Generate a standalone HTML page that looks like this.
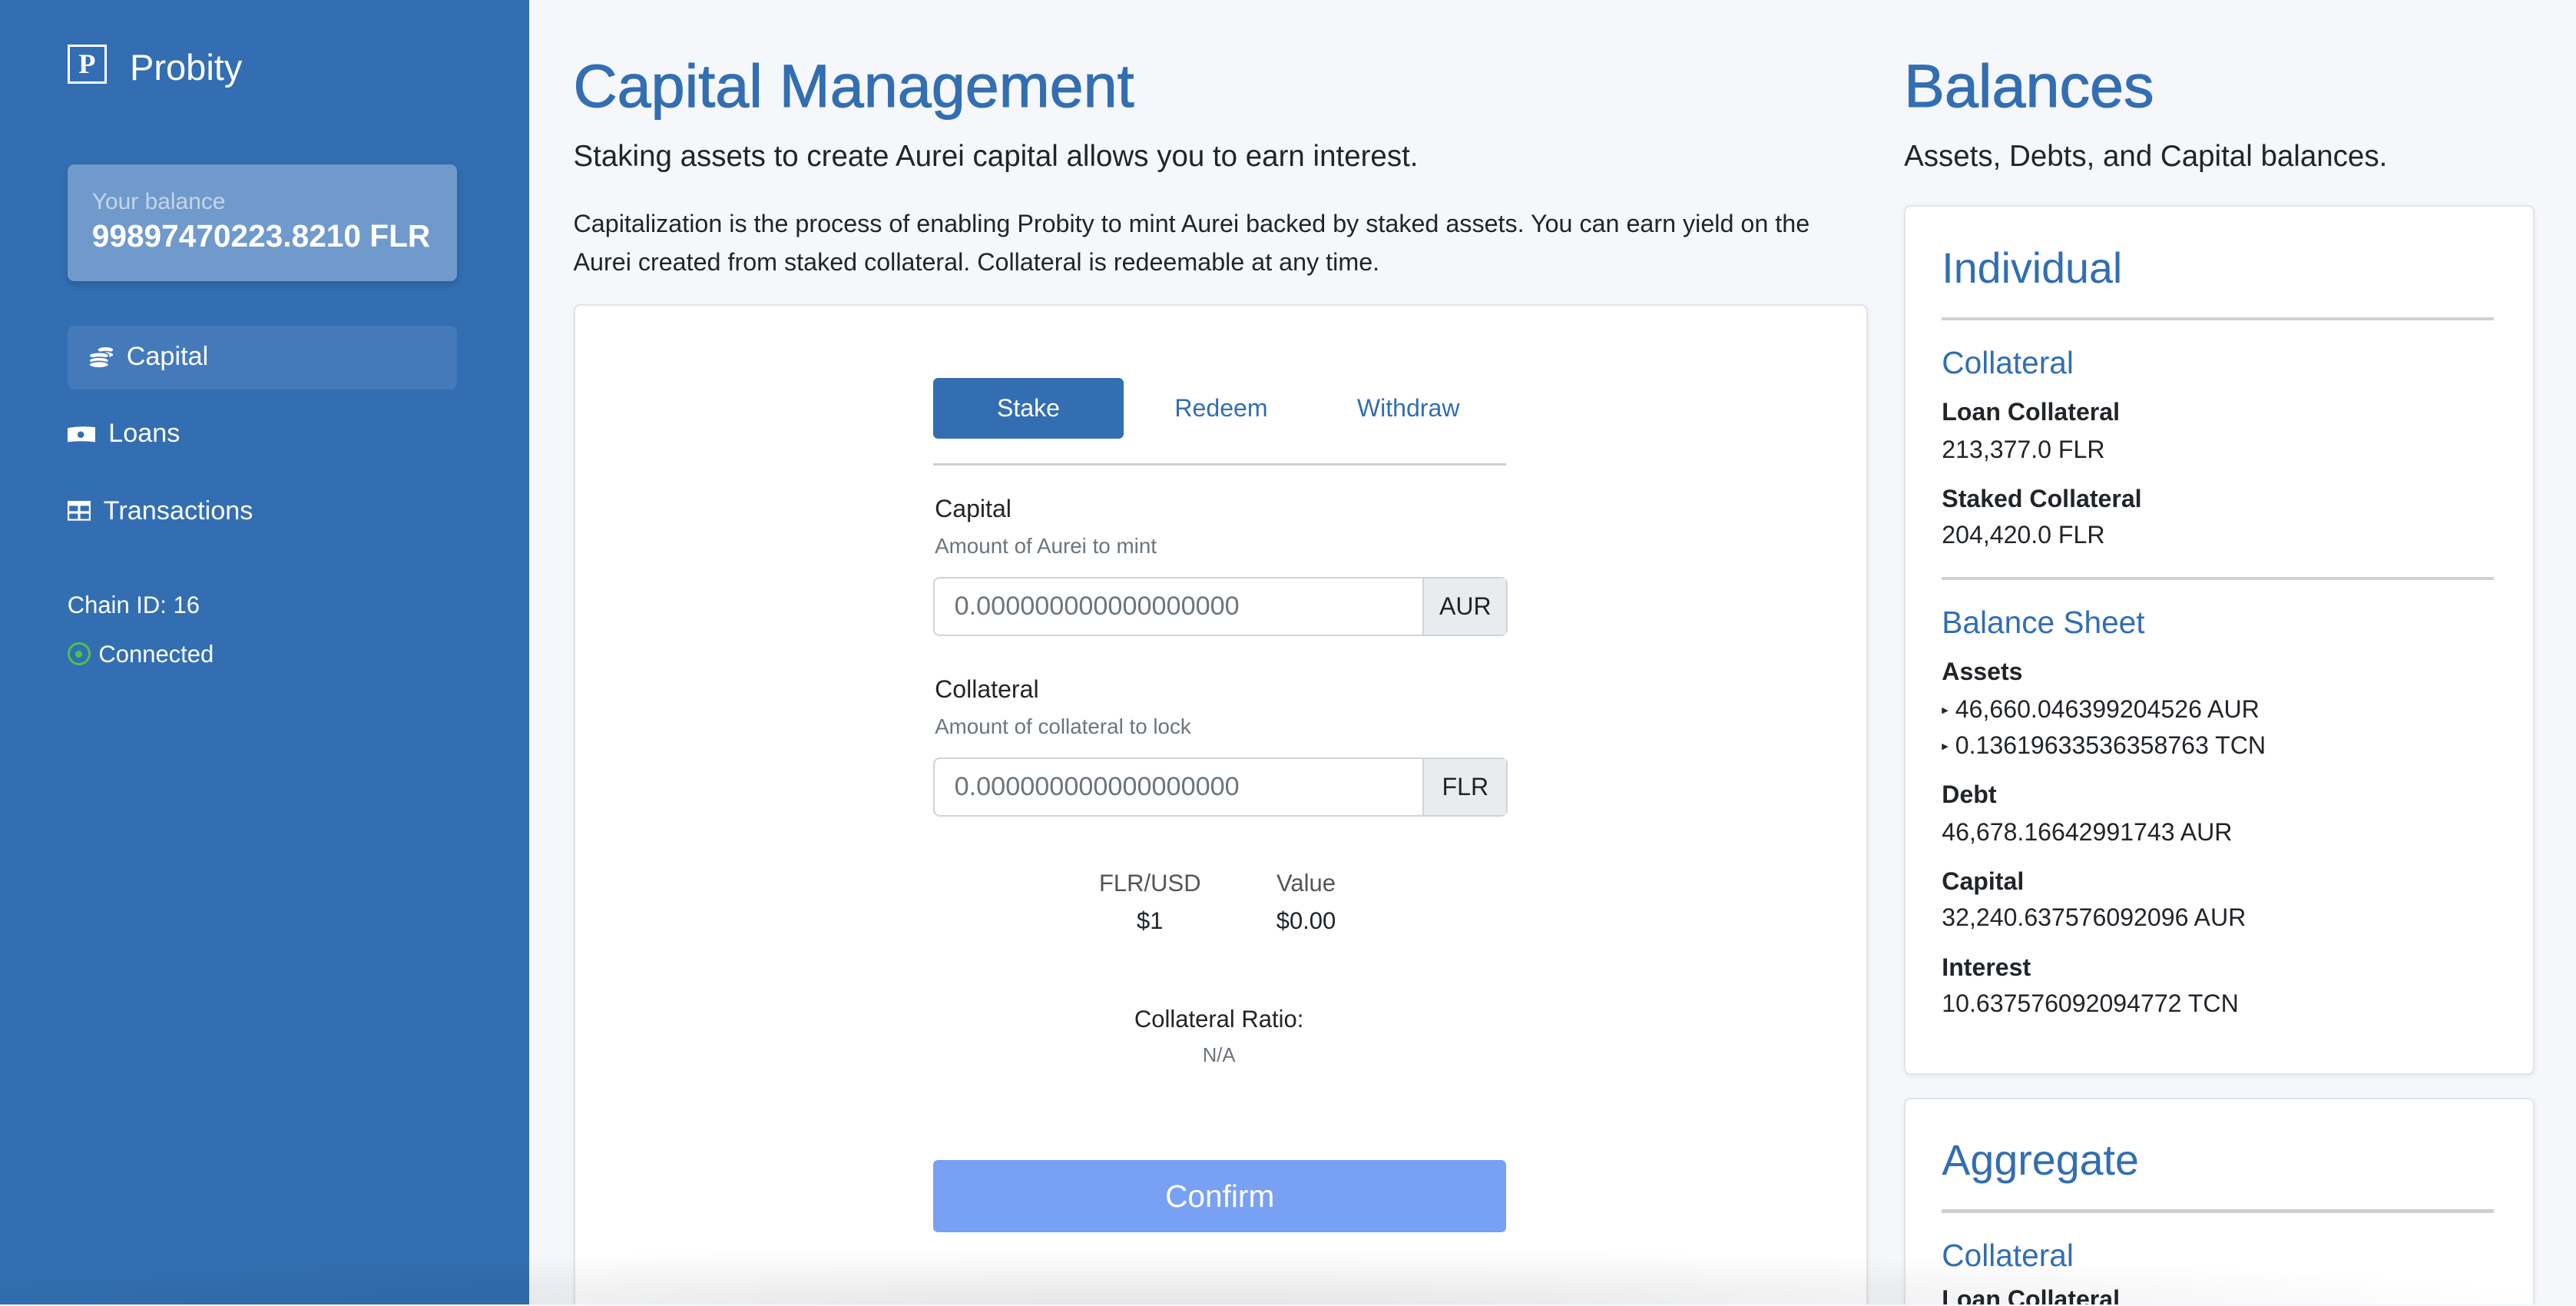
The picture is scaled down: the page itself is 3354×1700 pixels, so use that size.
<!DOCTYPE html>
<html style="height:1700px;overflow:hidden"><head><meta charset="utf-8"><style>
html,body{margin:0;padding:0}
body{width:3354px;height:1700px;overflow:hidden;background:#f5f7fa}
#w{width:1568px;height:794px;overflow:hidden;zoom:2.139;background:#f5f7fa;font-family:"Liberation Sans",sans-serif;position:relative;color:#212529}
.a{position:absolute;white-space:nowrap}
.sb{position:absolute;left:0;top:0;width:322px;height:794px;background:#326eb1;color:#fff}
.blue{color:#326eb1}
.card{position:absolute;background:#fff;border:1px solid #e1e4e8;border-radius:4px;box-shadow:0 1px 3px rgba(0,0,0,.06)}
.hr{position:absolute;height:2px;background:#d0d0d0}
.inp{position:absolute;left:568px;width:348px;height:34px;border:1px solid #ced4da;border-radius:4px;background:#fff}
.inp span{position:absolute;left:12px;top:8px;font-size:16px;color:#6c757d}
.inp b{position:absolute;right:0;top:0;width:50px;height:34px;background:#e9ecef;border-left:1px solid #ced4da;font-weight:normal;font-size:15px;line-height:34px;text-align:center;color:#212529}
.lbl{font-size:15px}
.hl{font-size:13px;color:#6c757d}
.k{font-size:15px;font-weight:bold}
.v{font-size:15px}
</style></head><body><div id="w">
<div class="sb">
 <div class="a" style="left:41px;top:27px;width:24px;height:24px;border:1.5px solid #fff;box-sizing:border-box;font-family:'Liberation Serif',serif;font-weight:bold;font-size:17px;text-align:center;line-height:21px">P</div>
 <div class="a" style="left:79px;top:28px;font-size:22px">Probity</div>
 <div class="a" style="left:41px;top:100px;width:237px;height:71px;background:#6f9acb;border-radius:4px;box-shadow:0 2px 4px rgba(0,0,0,.15)"></div>
 <div class="a" style="left:56px;top:115px;font-size:14px;color:#c5d5ea">Your balance</div>
 <div class="a" style="left:56px;top:133px;font-size:19px;font-weight:bold">99897470223.8210 FLR</div>
 <div class="a" style="left:41px;top:198px;width:237px;height:39px;background:#4479ba;border-radius:4px"></div>
 <svg class="a" style="left:54px;top:210px" width="16" height="14" viewBox="0 0 16 14"><g fill="#fff" stroke="#4479ba" stroke-width="0.8"><ellipse cx="10" cy="3" rx="5" ry="2"/><ellipse cx="10" cy="6" rx="5" ry="2"/><ellipse cx="6" cy="6.5" rx="6" ry="2"/><ellipse cx="6" cy="9.5" rx="6" ry="2"/><ellipse cx="6" cy="12" rx="6" ry="2"/></g></svg>
 <div class="a" style="left:77px;top:208px;font-size:16px">Capital</div>
 <svg class="a" style="left:41px;top:259px" width="17" height="11" viewBox="0 0 17 11"><path d="M0 1.5Q8 0 17 1V10Q8 9 0 10Z" fill="#fff"/><circle cx="8" cy="5.5" r="2" fill="#326eb1"/></svg>
 <div class="a" style="left:66px;top:255px;font-size:16px">Loans</div>
 <svg class="a" style="left:41px;top:305px" width="14" height="12" viewBox="0 0 14 12"><rect x="0.5" y="0.5" width="13" height="11" fill="none" stroke="#fff"/><rect x="0" y="0" width="14" height="3" fill="#fff"/><line x1="0" y1="7" x2="14" y2="7" stroke="#fff" stroke-width="1.5"/><line x1="7" y1="0" x2="7" y2="12" stroke="#fff" stroke-width="1.5"/></svg>
 <div class="a" style="left:63px;top:302px;font-size:16px">Transactions</div>
 <div class="a" style="left:41px;top:360px;font-size:14.5px">Chain ID: 16</div>
 <div class="a" style="left:41px;top:391px;width:14px;height:14px;border:1.5px solid #4ec24e;border-radius:50%;box-sizing:border-box"></div>
 <div class="a" style="left:46px;top:396px;width:4px;height:4px;background:#4ec24e;border-radius:50%"></div>
 <div class="a" style="left:60px;top:390px;font-size:14.5px">Connected</div>
</div>

<div class="a blue" style="left:349px;top:31px;font-size:37px;-webkit-text-stroke:0.5px #326eb1">Capital Management</div>
<div class="a" style="left:349px;top:85px;font-size:18px">Staking assets to create Aurei capital allows you to earn interest.</div>
<div class="a" style="left:349px;top:125px;font-size:15.1px;line-height:23px">Capitalization is the process of enabling Probity to mint Aurei backed by staked assets. You can earn yield on the<br>Aurei created from staked collateral. Collateral is redeemable at any time.</div>

<div class="card" style="left:349px;top:185px;width:786px;height:609px;border-bottom:none;border-radius:4px 4px 0 0"></div>
<div class="a" style="left:568px;top:230px;width:116px;height:37px;background:#326eb1;border-radius:3px;color:#fff;font-size:15px;text-align:center;line-height:37px">Stake</div>
<div class="a blue" style="left:715px;top:240px;font-size:15px">Redeem</div>
<div class="a blue" style="left:826px;top:240px;font-size:15px">Withdraw</div>
<div class="hr" style="left:568px;top:282px;width:349px;height:1.5px"></div>
<div class="a lbl" style="left:569px;top:301px">Capital</div>
<div class="a hl" style="left:569px;top:325px">Amount of Aurei to mint</div>
<div class="inp" style="top:351px"><span>0.000000000000000000</span><b>AUR</b></div>
<div class="a lbl" style="left:569px;top:411px">Collateral</div>
<div class="a hl" style="left:569px;top:435px">Amount of collateral to lock</div>
<div class="inp" style="top:461px"><span>0.000000000000000000</span><b>FLR</b></div>
<div class="a" style="left:660px;top:529px;width:80px;text-align:center;font-size:14.5px;color:#555">FLR/USD</div>
<div class="a" style="left:660px;top:552px;width:80px;text-align:center;font-size:14.5px">$1</div>
<div class="a" style="left:755px;top:529px;width:80px;text-align:center;font-size:14.5px;color:#555">Value</div>
<div class="a" style="left:755px;top:552px;width:80px;text-align:center;font-size:14.5px">$0.00</div>
<div class="a" style="left:642px;top:612px;width:200px;text-align:center;font-size:14.5px">Collateral Ratio:</div>
<div class="a" style="left:642px;top:636px;width:200px;text-align:center;font-size:12px;color:#6c757d">N/A</div>
<div class="a" style="left:568px;top:706px;width:349px;height:44px;background:#78a0f3;border-radius:3px;color:#fff;font-size:19px;text-align:center;line-height:44px">Confirm</div>

<div class="a blue" style="left:1159px;top:31px;font-size:37px;-webkit-text-stroke:0.5px #326eb1">Balances</div>
<div class="a" style="left:1159px;top:85px;font-size:18px">Assets, Debts, and Capital balances.</div>

<div class="card" style="left:1159px;top:125px;width:382px;height:527px"></div>
<div class="a blue" style="left:1182px;top:148px;font-size:26px">Individual</div>
<div class="hr" style="left:1182px;top:193px;width:336px"></div>
<div class="a blue" style="left:1182px;top:210px;font-size:19px">Collateral</div>
<div class="a k" style="left:1182px;top:242px">Loan Collateral</div>
<div class="a v" style="left:1182px;top:265px">213,377.0 FLR</div>
<div class="a k" style="left:1182px;top:295px">Staked Collateral</div>
<div class="a v" style="left:1182px;top:317px">204,420.0 FLR</div>
<div class="hr" style="left:1182px;top:351px;width:336px"></div>
<div class="a blue" style="left:1182px;top:368px;font-size:19px">Balance Sheet</div>
<div class="a k" style="left:1182px;top:400px">Assets</div>
<div class="a v" style="left:1182px;top:423px"><span style="font-size:8px;vertical-align:2px">▸</span> 46,660.046399204526 AUR</div>
<div class="a v" style="left:1182px;top:445px"><span style="font-size:8px;vertical-align:2px">▸</span> 0.13619633536358763 TCN</div>
<div class="a k" style="left:1182px;top:475px">Debt</div>
<div class="a v" style="left:1182px;top:498px">46,678.16642991743 AUR</div>
<div class="a k" style="left:1182px;top:528px">Capital</div>
<div class="a v" style="left:1182px;top:550px">32,240.637576092096 AUR</div>
<div class="a k" style="left:1182px;top:580px">Interest</div>
<div class="a v" style="left:1182px;top:602px">10.637576092094772 TCN</div>

<div class="card" style="left:1159px;top:668px;width:382px;height:126px;border-bottom:none;border-radius:4px 4px 0 0"></div>
<div class="a blue" style="left:1182px;top:691px;font-size:26px">Aggregate</div>
<div class="hr" style="left:1182px;top:736px;width:336px"></div>
<div class="a blue" style="left:1182px;top:753px;font-size:19px">Collateral</div>
<div class="a k" style="left:1182px;top:782px;height:12px;overflow:hidden">Loan Collateral</div>

<div class="a" style="left:0;top:760px;width:1568px;height:34px;background:radial-gradient(ellipse 55% 100% at 45% 100%,rgba(0,0,0,.10),rgba(0,0,0,0))"></div>
</div></body></html>
